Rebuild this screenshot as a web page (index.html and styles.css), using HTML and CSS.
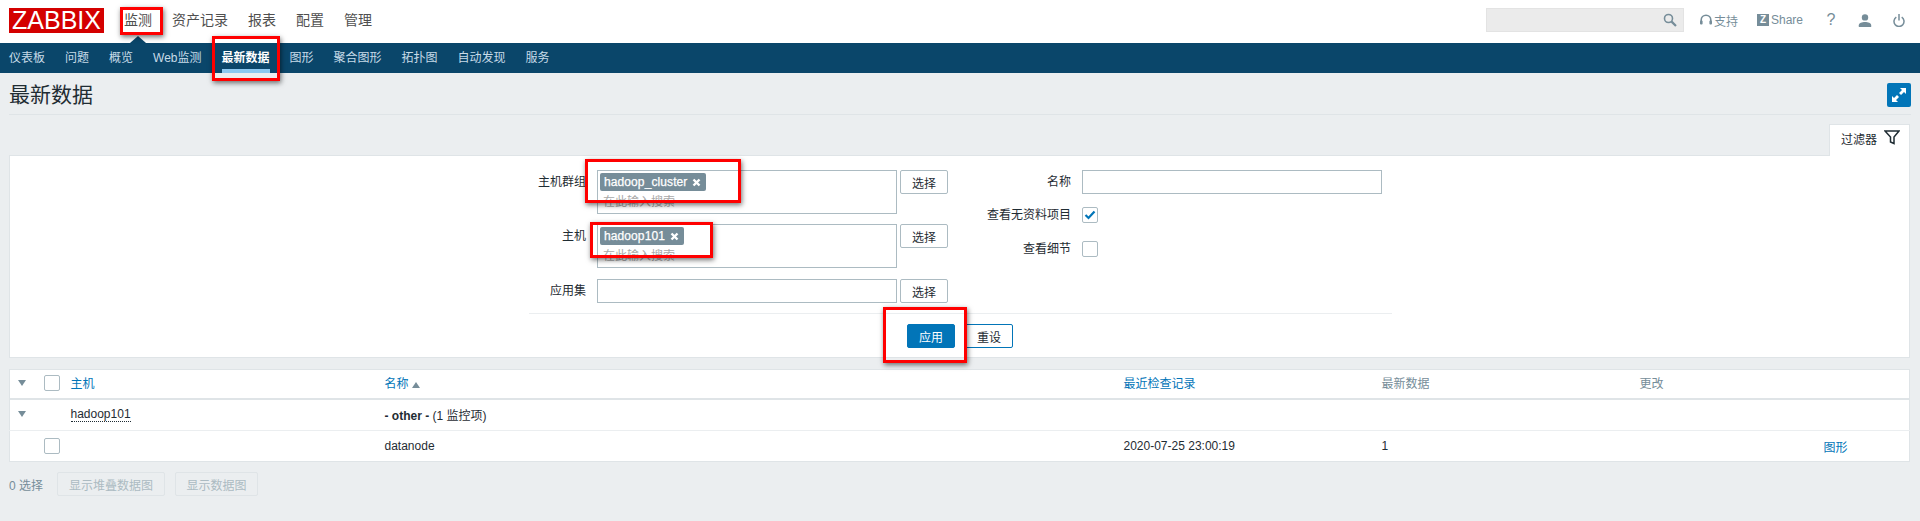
FILE: index.html
```html
<!DOCTYPE html>
<html lang="zh-CN">
<head>
    <meta charset="UTF-8">
    <title>最新数据</title>
    <link rel="stylesheet" href="styles.css">
</head>
<body>
    <header class="top-bar">
        <div class="logo">ZABBIX</div>
        <nav class="top-menu">
            <a>监测</a><a>资产记录</a><a>报表</a><a>配置</a><a>管理</a>
        </nav>
        <div class="top-tools">
            <div class="search-box">
                <svg class="search-icon" width="14" height="14" viewBox="0 0 14 14"><circle cx="5.500" cy="5.500" r="4" fill="none" stroke="#768d99" stroke-width="1.600"/><path d="M8.600 8.600 13 13" stroke="#768d99" stroke-width="2.200"/></svg>
            </div>
            <a class="tool tool-support">
                <svg width="12" height="13" viewBox="0 0 12 13"><path d="M1.200 8V6a4.800 4.800 0 0 1 9.600 0v2" fill="none" stroke="#768d99" stroke-width="1.600"/><rect x="0" y="6.500" width="2.600" height="4" rx="1" fill="#768d99"/><rect x="9.400" y="6.500" width="2.600" height="4" rx="1" fill="#768d99"/></svg>
                <span>支持</span>
            </a>
            <a class="tool tool-share"><b class="z-box">Z</b><span>Share</span></a>
            <a class="tool tool-help">?</a>
            <a class="tool tool-user">
                <svg width="14" height="13" viewBox="0 0 14 13"><circle cx="7" cy="3.400" r="3.200" fill="#768d99"/><path d="M0.800 13V11.200C0.800 9 4 8 7 8s6.200 1 6.200 3.200V13z" fill="#768d99"/></svg>
            </a>
            <a class="tool tool-power">
                <svg width="12" height="13" viewBox="0 0 12 13"><path d="M3.300 3.200a5 5 0 1 0 5.400 0" fill="none" stroke="#768d99" stroke-width="1.500"/><path d="M6 0v6.500" stroke="#768d99" stroke-width="1.500"/></svg>
            </a>
        </div>
    </header>
    <div class="menu-arrow"></div>
    <nav class="sub-menu">
        <a>仪表板</a><a>问题</a><a>概览</a><a>Web监测</a><a class="active">最新数据</a><a>图形</a><a>聚合图形</a><a>拓扑图</a><a>自动发现</a><a>服务</a>
    </nav>

    <main class="content">
        <div class="page-head">
            <h1>最新数据</h1>
            <button class="btn-fullscreen" type="button">
                <svg width="14" height="14" viewBox="0 0 14 14"><path d="M8 0h6v6l-2-2-3 3-2-2 3-3zM6 14H0V8l2 2 3-3 2 2-3 3z" fill="#fff"/></svg>
            </button>
        </div>

        <div class="filter-tabs">
            <div class="filter-tab">
                <span>过滤器</span>
                <svg width="16" height="15" viewBox="0 0 16 15"><path d="M1 1h14L10 7v6.500L6.500 12V7z" fill="none" stroke="#1f2c33" stroke-width="1.500"/></svg>
            </div>
        </div>

        <form class="filter-box">
            <div class="filter-cols">
                <div class="filter-left">
                    <label>主机群组</label>
                    <div class="multi">
                        <span class="tag">hadoop_cluster <svg width="9" height="9" viewBox="0 0 9 9"><path d="M1.500 1.500l6 6M7.500 1.500l-6 6" stroke="#fff" stroke-width="2.400"/></svg></span>
                        <span class="placeholder">在此输入搜索</span>
                    </div>
                    <button class="btn-alt" type="button">选择</button>

                    <label>主机</label>
                    <div class="multi">
                        <span class="tag">hadoop101 <svg width="9" height="9" viewBox="0 0 9 9"><path d="M1.500 1.500l6 6M7.500 1.500l-6 6" stroke="#fff" stroke-width="2.400"/></svg></span>
                        <span class="placeholder">在此输入搜索</span>
                    </div>
                    <button class="btn-alt" type="button">选择</button>

                    <label>应用集</label>
                    <div class="text-input"></div>
                    <button class="btn-alt" type="button">选择</button>
                </div>
                <div class="filter-right">
                    <label>名称</label>
                    <div class="text-input"></div>
                    <label>查看无资料项目</label>
                    <span class="check">
                        <svg width="12" height="10" viewBox="0 0 12 10"><path d="M1.500 5l3 3 6-6.500" fill="none" stroke="#0275b8" stroke-width="2.200"/></svg>
                    </span>
                    <label>查看细节</label>
                    <span class="check"></span>
                </div>
            </div>
            <div class="filter-actions">
                <button class="btn-apply" type="button">应用</button>
                <button class="btn-reset" type="button">重设</button>
            </div>
        </form>

        <table class="data-table">
            <colgroup>
                <col class="c-toggle"><col class="c-check"><col class="c-host"><col class="c-name">
                <col class="c-time"><col class="c-value"><col class="c-change"><col>
            </colgroup>
            <thead>
                <tr>
                    <th><i class="tri-down"></i></th>
                    <th><span class="check"></span></th>
                    <th><a>主机</a></th>
                    <th><a>名称</a> <i class="tri-up"></i></th>
                    <th><a>最近检查记录</a></th>
                    <th>最新数据</th>
                    <th>更改</th>
                    <th></th>
                </tr>
            </thead>
            <tbody>
                <tr>
                    <td><i class="tri-down"></i></td>
                    <td></td>
                    <td><span class="host-link">hadoop101</span></td>
                    <td><b>- other -</b> (1 监控项)</td>
                    <td></td><td></td><td></td><td></td>
                </tr>
                <tr>
                    <td></td>
                    <td><span class="check"></span></td>
                    <td></td>
                    <td>datanode</td>
                    <td>2020-07-25 23:00:19</td>
                    <td>1</td>
                    <td></td>
                    <td><a>图形</a></td>
                </tr>
            </tbody>
        </table>

        <div class="table-foot">
            <span class="selected">0 选择</span>
            <button class="btn-disabled btn-stacked" type="button" disabled>显示堆叠数据图</button>
            <button class="btn-disabled btn-graph" type="button" disabled>显示数据图</button>
        </div>
    </main>

    <!-- red boxes drawn on top of the screenshot -->
    <div class="mark mark-menu"></div>
    <div class="mark mark-sub"></div>
    <div class="mark mark-group"></div>
    <div class="mark mark-host"></div>
    <div class="mark mark-apply"></div>
</body>
</html>
```

FILE: styles.css
```css
* { box-sizing: border-box; }
html, body { height: 100%; }
body { margin: 0; background: #ebeef0; color: #1f2c33; font-family: "Liberation Sans", "Noto Sans CJK SC", sans-serif; font-size: 12px; overflow: hidden; position: relative; }
button { font-family: inherit; font-size: 12px; border-radius: 2px; padding: 0; height: 24px; }

/* top bar */
.top-bar { display: flex; align-items: flex-start; height: 43px; background: #fff; padding: 8px 0 0 9px; }
.logo { width: 95px; height: 25px; background: #d40000; color: #fff; font-size: 25px; line-height: 25px; text-align: center; }
.top-menu { display: flex; margin-left: 10px; font-size: 14px; line-height: 24px; color: #4f4f4f; }
.top-menu a { padding: 0 10px; }
.top-tools { display: flex; align-items: center; height: 24px; margin-left: auto; padding-right: 15px; color: #768d99; }
.search-box { display: flex; align-items: center; justify-content: flex-end; width: 198px; height: 24px; padding-right: 6px; background: #ebebeb; border: 1px solid #e3e3e3; }
.tool { display: flex; align-items: center; gap: 2px; }
.tool-support { margin-left: 16px; }
.tool-share { margin-left: 19px; }
.tool-help { margin-left: 23px; width: 10px; justify-content: center; font-size: 16px; }
.tool-user { margin-left: 22px; }
.tool-power { margin-left: 21px; }
.z-box { width: 12px; height: 12px; background: #768d99; color: #fff; font-size: 10px; line-height: 12px; text-align: center; }
.menu-arrow { position: absolute; left: 130px; top: 36px; border: 8px solid transparent; border-top: 0; border-bottom: 7px solid #0a466a; }

.sub-menu { display: flex; height: 30px; padding-left: 9px; background: #0a466a; color: #c7dbe8; line-height: 30px; }
.sub-menu a { height: 30px; margin-right: 20px; }
.sub-menu .active { color: #fff; font-weight: bold; border-bottom: 4px solid #8cc8f0; }

/* page */
.content { padding: 0 9px; }
.page-head { display: flex; justify-content: space-between; align-items: center; height: 42px; padding: 10px 0 7px; border-bottom: 1px solid #dfe4e7; }
h1 { margin: 0; font-size: 21px; font-weight: normal; line-height: 24px; }
.btn-fullscreen { display: flex; align-items: center; justify-content: center; width: 24px; background: #0275b8; border: 0; }

.filter-tabs { display: flex; justify-content: flex-end; margin-top: 9px; padding-right: 1px; }
.filter-tab { display: flex; align-items: flex-start; justify-content: space-between; width: 81px; height: 32px; margin-bottom: -1px; padding: 5px 9px 0 11px; background: #fff; border: 1px solid #dfe4e7; border-bottom: 0; position: relative; }
.filter-box { height: 203px; margin-right: 1px; padding: 14px 0 0 2px; background: #fff; border: 1px solid #dfe4e7; }
.filter-cols { display: flex; width: 863px; height: 144px; margin: 0 auto; border-bottom: 1px solid #ebeef0; }
.filter-left { display: grid; grid-template-columns: 57px 311px 51px; grid-template-rows: 54px 55px 24px; }
.filter-left .multi, .filter-left .text-input { margin-left: 11px; }
.filter-left .btn-alt { margin-left: 3px; }
.filter-right { display: grid; grid-template-columns: 111px 300px; grid-template-rows: 37px 34px 16px; column-gap: 11px; margin-left: 12px; }
label { text-align: right; line-height: 24px; }
.filter-right label { line-height: 16px; }
.filter-right label:first-child { line-height: 24px; }
.text-input { height: 24px; background: #fff; border: 1px solid #acbbc2; }
.multi { display: flex; flex-direction: column; align-items: flex-start; height: 44px; padding: 2px; background: #fff; border: 1px solid #acbbc2; }
.tag { display: flex; align-items: center; gap: 5px; height: 18px; padding: 0 5px 0 4px; background: #768d99; color: #fff; border-radius: 2px; letter-spacing: 0.1px; -webkit-text-stroke: 0.25px #fff; }
.placeholder { margin: 4px 0 0 3px; color: #a9a9a9; line-height: 14px; }
.btn-alt { background: #fff; border: 1px solid #acbbc2; color: #1f2c33; }
.check { display: flex; align-items: center; justify-content: center; width: 16px; height: 16px; background: #fff; border: 1px solid #acbbc2; border-radius: 2px; }
.filter-actions { display: flex; justify-content: center; gap: 10px; margin-right: 1px; padding-top: 10px; }
.filter-actions button { width: 48px; }
.btn-apply { background: #0275b8; border: 1px solid #0275b8; color: #fff; }
.btn-reset { background: #fff; border: 1px solid #0275b8; color: #1f2c33; }

/* table */
.data-table { width: 1901px; margin: 11px 0 0 0; table-layout: fixed; border-collapse: collapse; background: #fff; border: 1px solid #dfe4e7; }
.c-toggle { width: 34px; }
.c-check { width: 27px; }
.c-host { width: 314px; }
.c-name { width: 739px; }
.c-time { width: 258px; }
.c-value { width: 258px; }
.c-change { width: 184px; }
th, td { padding: 0; text-align: left; font-weight: normal; }
thead th { height: 29px; padding-bottom: 2px; color: #768d99; border-bottom: 2px solid #dfe4e7; }
td { height: 32px; padding-bottom: 1px; border-bottom: 1px solid #ebeef0; }
tbody tr:last-child td { height: 31px; padding-bottom: 0; border-bottom: 0; }
th a, td a { color: #0275b8; }
td:first-child, th:first-child { padding-left: 8px; }
.data-table b { font-weight: bold; }
.tri-down { display: block; width: 0; border: 4px solid transparent; border-bottom: 0; border-top: 6px solid #768d99; }
.tri-up { display: inline-block; width: 0; border: 4px solid transparent; border-top: 0; border-bottom: 6px solid #768d99; }
.host-link { border-bottom: 1px dotted #1f2c33; }

.table-foot { display: flex; align-items: center; height: 24px; margin-top: 10px; }
.selected { width: 48px; color: #768d99; }
.btn-disabled { background: #ebeef0; border: 1px solid #dfe4e7; color: #acbbc2; }
.btn-stacked { width: 108px; margin-right: 10px; }
.btn-graph { width: 83px; }

/* annotation boxes */
.mark { position: absolute; border: 3px solid #f00; box-shadow: 1px 2px 5px rgba(0, 0, 0, 0.55); }
.mark-menu { left: 120px; top: 7px; width: 43px; height: 28px; }
.mark-sub { left: 212px; top: 36px; width: 68px; height: 45px; }
.mark-group { left: 585px; top: 159px; width: 156px; height: 44px; }
.mark-host { left: 590px; top: 222px; width: 123px; height: 36px; }
.mark-apply { left: 883px; top: 307px; width: 84px; height: 56px; }
```
